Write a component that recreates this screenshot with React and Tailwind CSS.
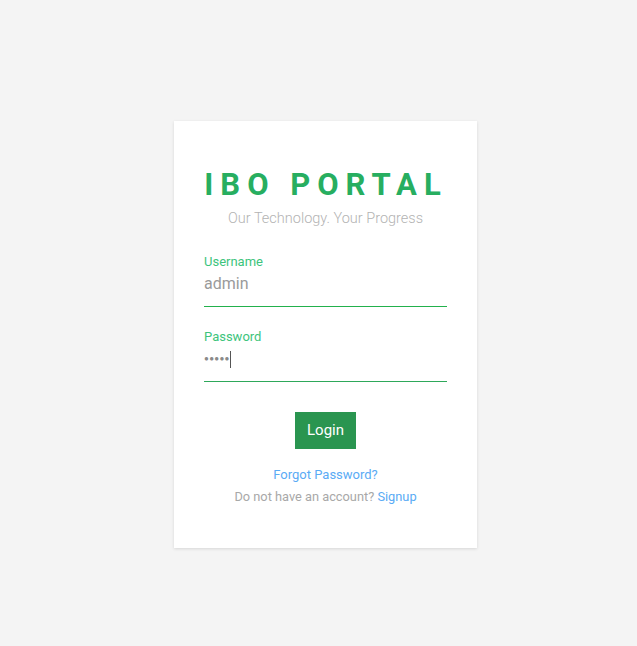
import React from 'react';

const App = () => {
  return (
    <div
      className="min-h-[646px] bg-[#f4f4f4] flex justify-center pt-[121px] pl-[14px]"
      style={{ fontFamily: 'Roboto, "Liberation Sans", sans-serif' }}
    >
      <div className="w-[303px] h-[427px] bg-white shadow-[0_1px_3px_rgba(0,0,0,0.12)] px-[30px] pt-[46px]">
        {/* Brand */}
        <h1 className="text-center whitespace-nowrap -mx-[20px] text-[31px] leading-[36px] font-bold tracking-[7px] text-[#27ae60] pl-[1px]">
          IBO PORTAL
        </h1>
        <p className="text-center text-[14.5px] leading-[20px] font-light text-[#b3b3b3] mt-[6px]">
          Our Technology. Your Progress
        </p>

        {/* Username */}
        <div className="mt-[25px]">
          <label className="block text-[13px] leading-[16px] text-[#3cc47c]">Username</label>
          <div className="text-[16px] leading-[22px] text-[#9a9a9a] mt-[3px] h-[33px]">admin</div>
          <div className="h-px bg-[#22b14c]" />
        </div>

        {/* Password */}
        <div className="mt-[22px]">
          <label className="block text-[13px] leading-[16px] text-[#3cc47c]">Password</label>
          <div className="mt-[3px] h-[33px]">
            <div className="flex items-center h-[22px]">
              <span className="text-[8px] leading-[22px] text-[#8a8a8a] tracking-[0.3px]">●●●●●</span>
              <span className="w-px h-[17px] bg-[#555]" />
            </div>
          </div>
          <div className="h-px bg-[#2ea85a]" />
        </div>

        {/* Submit */}
        <div className="flex justify-center mt-[30px]">
          <button className="w-[61px] h-[37px] bg-[#2a9550] text-white text-[15px]">Login</button>
        </div>

        <div className="text-center mt-[18px] text-[13px] leading-[16px] text-[#5aabf5]">Forgot Password?</div>
        <div className="text-center mt-[6px] text-[12.8px] leading-[16px] text-[#a8a8a8]">
          Do not have an account? <span className="text-[#5aabf5]">Signup</span>
        </div>
      </div>
    </div>
  );
};

export default App;
